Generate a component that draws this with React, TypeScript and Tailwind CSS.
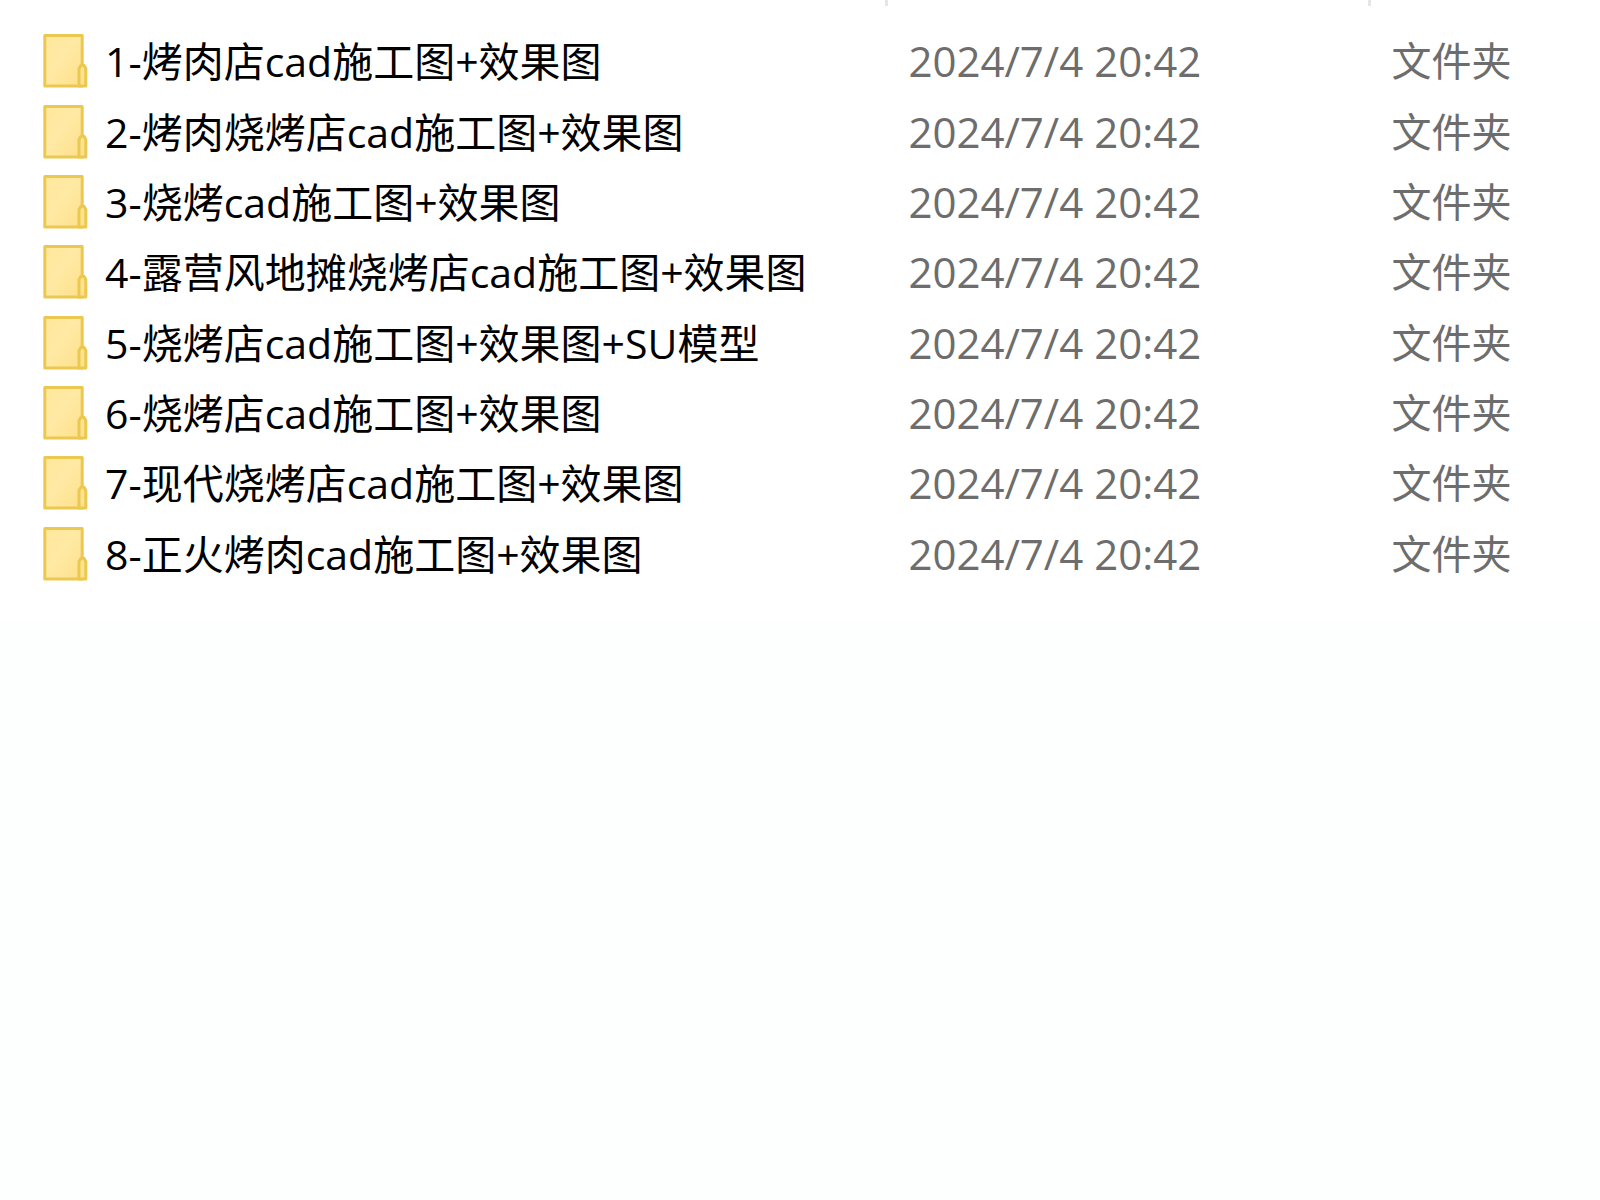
type Folder = {
  name: string;
  modified: string;
  kind: string;
};

const folders: Folder[] = [
  { name: "1-烤肉店cad施工图+效果图", modified: "2024/7/4 20:42", kind: "文件夹" },
  { name: "2-烤肉烧烤店cad施工图+效果图", modified: "2024/7/4 20:42", kind: "文件夹" },
  { name: "3-烧烤cad施工图+效果图", modified: "2024/7/4 20:42", kind: "文件夹" },
  { name: "4-露营风地摊烧烤店cad施工图+效果图", modified: "2024/7/4 20:42", kind: "文件夹" },
  { name: "5-烧烤店cad施工图+效果图+SU模型", modified: "2024/7/4 20:42", kind: "文件夹" },
  { name: "6-烧烤店cad施工图+效果图", modified: "2024/7/4 20:42", kind: "文件夹" },
  { name: "7-现代烧烤店cad施工图+效果图", modified: "2024/7/4 20:42", kind: "文件夹" },
  { name: "8-正火烤肉cad施工图+效果图", modified: "2024/7/4 20:42", kind: "文件夹" }
];

function FolderIcon() {
  return (
    <svg className="h-14 w-12 flex-shrink-0" viewBox="0 0 48 56" fill="none" aria-hidden="true">
      <defs>
        <linearGradient id="folder-fill" x1="0" y1="0" x2="1" y2="1">
          <stop offset="0" stopColor="#ffe79c" />
          <stop offset="0.45" stopColor="#ffe9a4" />
          <stop offset="1" stopColor="#fde08a" />
        </linearGradient>
      </defs>
      <path d="M3.8 2.5H41.2V53H3.8Z" fill="url(#folder-fill)" stroke="#ebc850" strokeWidth="3" strokeLinejoin="round" />
      <path d="M38 53V35.5L40 32.3H43L44.8 35.5V53Z" fill="#fde391" stroke="#ebc850" strokeWidth="3" strokeLinejoin="round" />
    </svg>
  );
}

export default function App() {
  return (
    <div lang="zh-CN" className="flex min-h-screen flex-col bg-[#fcfffe] font-['Open_Sans','Noto_Sans_CJK_SC',sans-serif]">
      <div className="bg-white pb-8">
        <table className="w-full table-fixed border-collapse text-left">
          <colgroup>
            <col className="w-[55.4%]" />
            <col className="w-[30.2%]" />
            <col />
          </colgroup>
          <thead>
            <tr className="h-[6px]">
              <td />
              <td className="border-l-3 border-[#e6e6e6]" />
              <td className="border-l-3 border-[#e6e6e6]" />
            </tr>
          </thead>
        </table>
        <table className="mt-5 h-[563px] w-full table-fixed border-collapse whitespace-nowrap text-left">
          <colgroup>
            <col className="w-[55.4%]" />
            <col className="w-[30.2%]" />
            <col />
          </colgroup>
          <tbody>
            {folders.map((f) => (
              <tr key={f.name}>
                <td className="p-0 pl-[41px]">
                  <div className="flex items-center gap-4">
                    <FolderIcon />
                    <span className="text-[41px] leading-[60px] text-black">{f.name}</span>
                  </div>
                </td>
                <td className="p-0 pl-[22px] text-[42px] leading-[60px] text-[#6d6d6d]">{f.modified}</td>
                <td className="p-0 pl-[22px] text-[40px] leading-[60px] text-[#6d6d6d]">{f.kind}</td>
              </tr>
            ))}
          </tbody>
        </table>
      </div>
    </div>
  );
}
